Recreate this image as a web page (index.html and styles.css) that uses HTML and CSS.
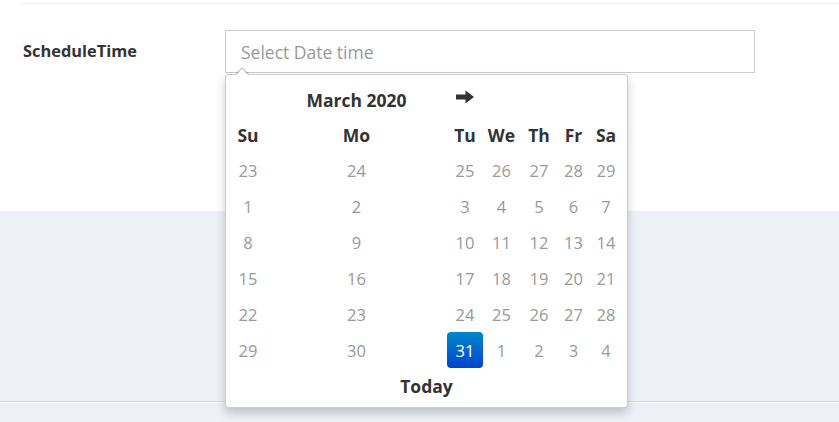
FILE: index.html
```html
<!DOCTYPE html>
<html lang="en">
<head>
<meta charset="utf-8">
<title>Schedule</title>
<link rel="stylesheet" href="styles.css">
</head>
<body>
<div class="page">
  <section class="panel">
    <div class="rule"></div>
    <div class="form-row">
      <label class="label" for="dt">ScheduleTime</label>
      <div class="field">
        <input id="dt" class="input" type="text" placeholder="Select Date time">
        <div class="picker">
          <table class="cal">
            <colgroup>
              <col class="c-su"><col class="c-mo"><col class="c-tu"><col class="c-we"><col class="c-th"><col class="c-fr"><col class="c-sa">
            </colgroup>
            <thead>
              <tr class="nav">
                <th></th>
                <th class="switch">March 2020</th>
                <th class="next"><svg width="18" height="14" viewBox="0 0 18 14"><path d="M0 4.5h9.5V0.5L18 7l-8.5 6.5V9.5H0z" fill="#333"/></svg></th>
                <th></th><th></th><th></th><th></th>
              </tr>
              <tr class="dow">
                <th>Su</th><th>Mo</th><th>Tu</th><th>We</th><th>Th</th><th>Fr</th><th>Sa</th>
              </tr>
            </thead>
            <tbody>
              <tr><td>23</td><td>24</td><td>25</td><td>26</td><td>27</td><td>28</td><td>29</td></tr>
              <tr><td>1</td><td>2</td><td>3</td><td>4</td><td>5</td><td>6</td><td>7</td></tr>
              <tr><td>8</td><td>9</td><td>10</td><td>11</td><td>12</td><td>13</td><td>14</td></tr>
              <tr><td>15</td><td>16</td><td>17</td><td>18</td><td>19</td><td>20</td><td>21</td></tr>
              <tr><td>22</td><td>23</td><td>24</td><td>25</td><td>26</td><td>27</td><td>28</td></tr>
              <tr><td>29</td><td>30</td><td class="active">31</td><td>1</td><td>2</td><td>3</td><td>4</td></tr>
            </tbody>
            <tfoot>
              <tr><th colspan="7" class="today">Today</th></tr>
            </tfoot>
          </table>
        </div>
      </div>
    </div>
  </section>
  <section class="band"></section>
  <section class="foot"></section>
</div>
</body>
</html>
```

FILE: styles.css
```css
html, body {
  margin: 0;
  padding: 0;
}
body {
  font-family: "Open Sans", "Liberation Sans", sans-serif;
  color: #333;
  background: #edf0f5;
}
.page {
  width: 839px;
  height: 422px;
  overflow: hidden;
}
.panel {
  background: #fff;
  height: 211px;
  padding-top: 3px;
  box-sizing: border-box;
}
.rule {
  margin-left: 22px;
  border-top: 1px solid #eee;
}
.form-row {
  display: flex;
  align-items: center;
  margin-top: 26px;
  padding-left: 23px;
}
.label {
  width: 202px;
  font-weight: 700;
  font-size: 16.4px;
  color: #333;
  margin-top: -3px;
}
.field {
  position: relative;
}
.input {
  display: block;
  width: 530px;
  height: 43px;
  box-sizing: border-box;
  border: 1px solid #ccc;
  border-radius: 0;
  padding: 0 15px;
  font-family: "Open Sans", "Liberation Sans", sans-serif;
  font-size: 17.5px;
  color: #555;
  outline: none;
}
.input::placeholder {
  color: #999;
}
.picker {
  position: absolute;
  z-index: 10;
  left: 0;
  top: 44px;
  width: 403px;
  box-sizing: border-box;
  background: #fff;
  border: 1px solid rgba(0,0,0,0.2);
  border-radius: 4px;
  box-shadow: 0 5px 10px rgba(0,0,0,0.2);
  padding: 7px 3px 3px 4px;
}
.picker::before {
  content: "";
  position: absolute;
  left: 9px;
  top: -8px;
  border-left: 7px solid transparent;
  border-right: 7px solid transparent;
  border-bottom: 7px solid rgba(0,0,0,0.2);
}
.picker::after {
  content: "";
  position: absolute;
  left: 10px;
  top: -6px;
  border-left: 6px solid transparent;
  border-right: 6px solid transparent;
  border-bottom: 6px solid #fff;
}
.cal {
  border-collapse: collapse;
  table-layout: fixed;
  width: 393px;
  font-size: 16.5px;
}
.c-su { width: 36px; }
.c-mo { width: 181px; }
.c-tu { width: 36px; }
.c-we { width: 37px; }
.c-th { width: 38px; }
.c-fr { width: 31px; }
.c-sa { width: 34px; }
.cal th, .cal td {
  padding: 0;
  text-align: center;
}
.cal th {
  font-weight: 700;
  color: #333;
  font-size: 17.5px;
}
.nav th, .dow th {
  height: 35px;
}
.next svg {
  display: block;
  margin: -6px auto 0;
}
.cal td {
  height: 36px;
  color: #999;
}
.cal td.active {
  color: #fff;
  border-radius: 4px;
  background: linear-gradient(to bottom, #0088cc, #0044cc);
}
.today {
  height: 36px;
}
.band {
  height: 190px;
  border-bottom: 1px solid #d8dbe0;
}
.foot {
  height: 20px;
  border-top: 1px solid #f6f7f9;
}
```
